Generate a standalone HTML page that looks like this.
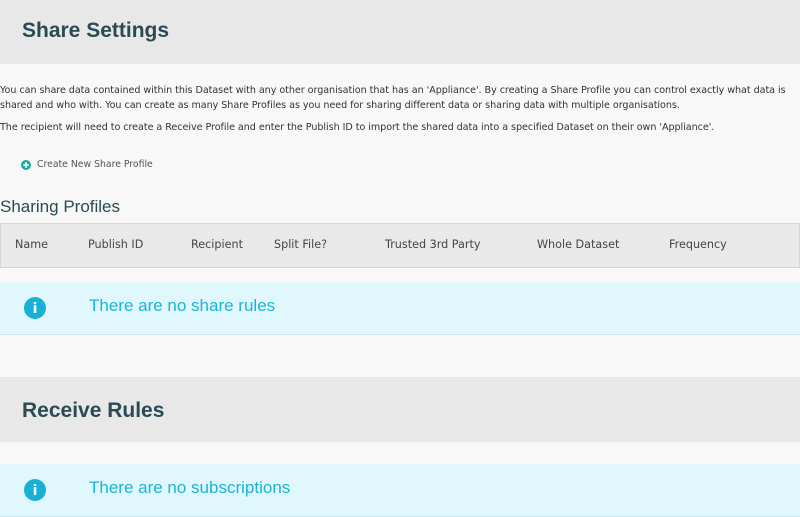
<!DOCTYPE html>
<html><head><meta charset="utf-8"><style>
body{margin:0;width:800px;height:516px;background:#f8f8f8;position:relative;overflow:hidden;font-family:"DejaVu Sans","Liberation Sans",sans-serif;}
.a{position:absolute;white-space:nowrap}
.band{position:absolute;left:0;width:800px;background:#e8e8e8}
h1{margin:0;position:absolute;left:22px;font:bold 21px "Liberation Sans",Arial,sans-serif;color:#2a4a55}
.p{font-size:9.6px;color:#333;left:0;letter-spacing:-0.05px}
.th{font-size:11.2px;color:#444;top:238px}
.info{position:absolute;left:0;width:800px;height:52px;background:#dff7fd;border-bottom:1px solid #cfe9ee}
.info .t{position:absolute;left:89px;top:14px;font:17px "Liberation Sans",Arial,sans-serif;color:#1bb4d6}
.info svg{position:absolute;left:24px;top:15px}
</style></head><body>
<div class="band" style="top:0;height:64px"><h1 style="top:19px">Share Settings</h1></div>
<div class="a p" style="top:85px">You can share data contained within this Dataset with any other organisation that has an 'Appliance'. By creating a Share Profile you can control exactly what data is</div>
<div class="a p" style="top:100px">shared and who with. You can create as many Share Profiles as you need for sharing different data or sharing data with multiple organisations.</div>
<div class="a p" style="top:122px">The recipient will need to create a Receive Profile and enter the Publish ID to import the shared data into a specified Dataset on their own 'Appliance'.</div>
<svg class="a" style="left:21px;top:160px" width="10" height="10" viewBox="0 0 10 10"><circle cx="5" cy="5" r="5" fill="#1aa89f"/><path d="M5 2.3v5.4M2.3 5h5.4" stroke="#fff" stroke-width="1.8"/></svg>
<div class="a" style="left:37px;top:159px;font-size:9.3px;color:#555">Create New Share Profile</div>
<div class="a" style="left:0;top:197px;font:17px 'Liberation Sans',Arial,sans-serif;color:#2a4a55">Sharing Profiles</div>
<div style="position:absolute;left:0;top:223px;width:798px;height:43px;background:#e9e9e9;border:1px solid #d6d6d6"></div>
<div class="a th" style="left:15px">Name</div>
<div class="a th" style="left:88px">Publish ID</div>
<div class="a th" style="left:191px">Recipient</div>
<div class="a th" style="left:274px">Split File?</div>
<div class="a th" style="left:385px">Trusted 3rd Party</div>
<div class="a th" style="left:537px">Whole Dataset</div>
<div class="a th" style="left:669px">Frequency</div>
<div class="info" style="top:282px"><svg width="22" height="22" viewBox="0 0 22 22"><circle cx="11" cy="11" r="11" fill="#19b0d6"/><text x="11" y="16" text-anchor="middle" font-family="DejaVu Sans" font-weight="bold" font-size="14" fill="#fff">i</text></svg><div class="t">There are no share rules</div></div>
<div class="band" style="top:377px;height:65px"><h1 style="top:22px;font-size:21px">Receive Rules</h1></div>
<div class="info" style="top:464px"><svg width="22" height="22" viewBox="0 0 22 22"><circle cx="11" cy="11" r="11" fill="#19b0d6"/><text x="11" y="16" text-anchor="middle" font-family="DejaVu Sans" font-weight="bold" font-size="14" fill="#fff">i</text></svg><div class="t">There are no subscriptions</div></div>
</body></html>
